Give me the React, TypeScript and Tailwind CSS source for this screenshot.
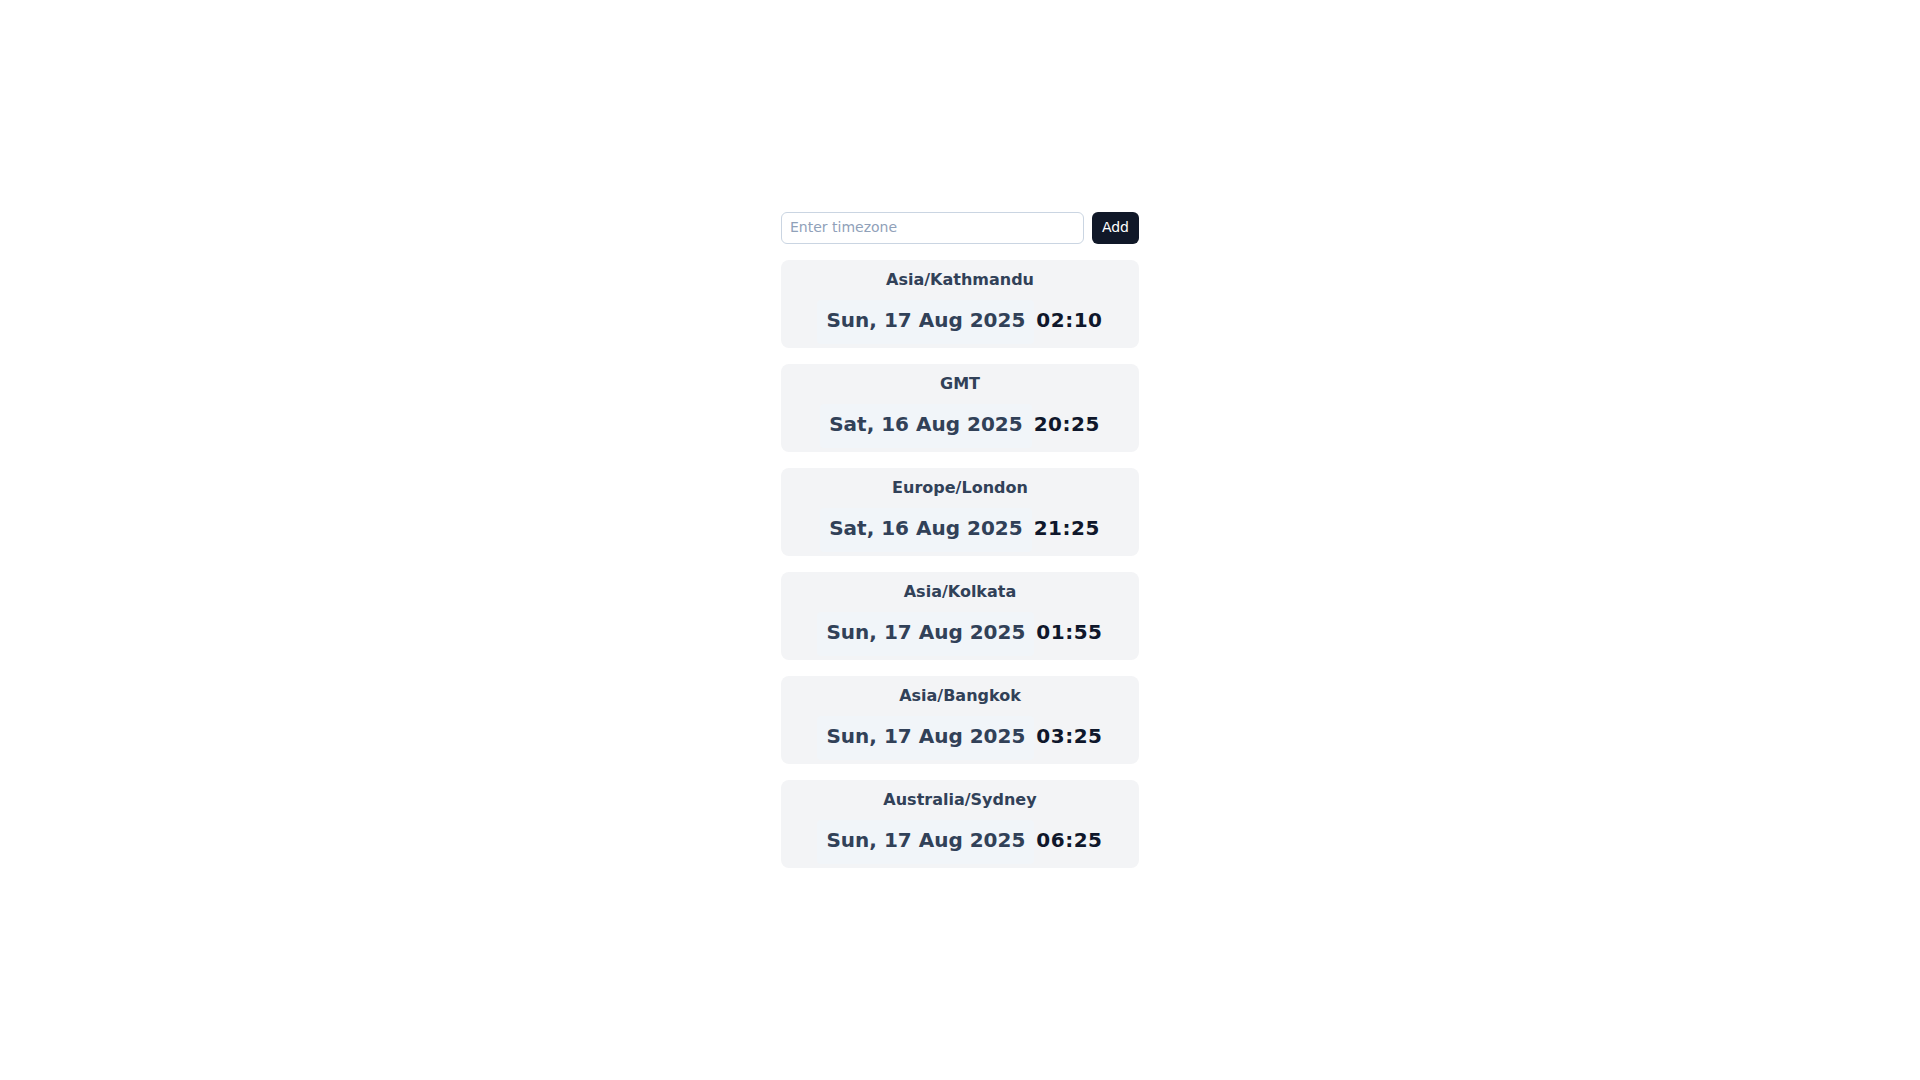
const zones = [
  { name: "Asia/Kathmandu", date: "Sun, 17 Aug 2025", time: "02:10" },
  { name: "GMT", date: "Sat, 16 Aug 2025", time: "20:25" },
  { name: "Europe/London", date: "Sat, 16 Aug 2025", time: "21:25" },
  { name: "Asia/Kolkata", date: "Sun, 17 Aug 2025", time: "01:55" },
  { name: "Asia/Bangkok", date: "Sun, 17 Aug 2025", time: "03:25" },
  { name: "Australia/Sydney", date: "Sun, 17 Aug 2025", time: "06:25" },
];

const App = () => {
  return (
    <div className="min-h-screen bg-white flex items-center justify-center font-['DejaVu_Sans',sans-serif]">
      <div className="w-[358px] flex flex-col gap-4">
        <div className="flex gap-2">
          <input
            type="text"
            placeholder="Enter timezone"
            className="flex-1 min-w-0 h-8 px-2 pb-[2px] text-sm border border-slate-300 rounded-md placeholder:text-slate-400 outline-none"
          />
          <button className="h-8 px-2.5 pb-[2px] text-sm text-white bg-gray-900 rounded-md">
            Add
          </button>
        </div>

        {zones.map((zone) => (
          <div key={zone.name} className="bg-gray-100 rounded-lg pt-2 pb-1 text-center">
            <div className="text-base leading-6 font-bold text-slate-700">{zone.name}</div>
            <div className="mt-2 flex justify-center items-start gap-[2px]">
              <span className="px-[9px] pt-1.5 pb-2.5 bg-slate-100 rounded text-xl leading-7 font-bold text-slate-700">
                {zone.date}
              </span>
              <span className="pt-1.5 pb-2.5 text-xl leading-7 font-bold tracking-wide text-slate-900">
                {zone.time}
              </span>
            </div>
          </div>
        ))}
      </div>
    </div>
  );
};

export default App;
